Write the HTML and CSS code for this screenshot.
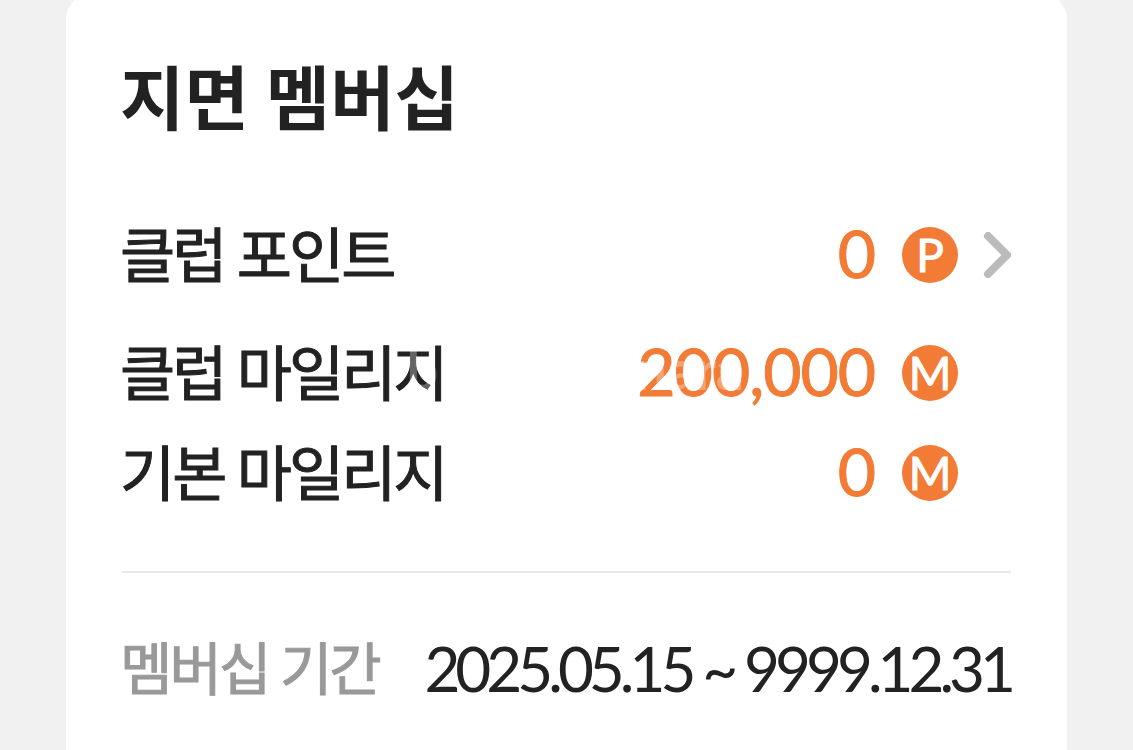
FILE: index.html
```html
<!DOCTYPE html>
<html lang="ko">
<head>
<meta charset="UTF-8">
<meta name="viewport" content="width=device-width, initial-scale=1.0">
<title>지면 멤버십</title>
<link rel="stylesheet" href="styles.css">
</head>
<body>
<main class="card">
    <h1 class="title">지면 멤버십</h1>
    <dl class="balances">
        <div class="row row-point">
            <dt>클럽 포인트</dt>
            <dd>
                <span class="amount">0</span>
                <span class="coin">P</span>
                <a class="more" href="#" aria-label="클럽 포인트 상세">
                    <svg viewBox="0 0 28 46" width="28" height="46"><path d="M5 4 L24 23 L5 42"/></svg>
                </a>
            </dd>
        </div>
        <div class="row">
            <dt>클럽 마일리지</dt>
            <dd>
                <span class="amount">200,000</span>
                <span class="coin">M</span>
                <span class="more"></span>
            </dd>
        </div>
        <div class="row">
            <dt>기본 마일리지</dt>
            <dd>
                <span class="amount">0</span>
                <span class="coin">M</span>
                <span class="more"></span>
            </dd>
        </div>
        <div class="watermark" aria-hidden="true"><span>b</span><span>nara</span></div>
    </dl>
    <dl class="period">
        <dt>멤버십 기간</dt>
        <dd>2025.05.15 ~ 9999.12.31</dd>
    </dl>
</main>
</body>
</html>
```
FILE: styles.css
```css
* {
    box-sizing: border-box;
}

body {
    margin: 0;
    padding: 0 66px;
    background-color: #f1f1f1;
    color: #222;
    font-family: Lato, "Noto Sans CJK KR", sans-serif;
    overflow-x: hidden;
}

.card {
    min-height: calc(100vh + 8px);
    margin-top: -8px;
    padding: 58px 56px 32px;
    background-color: #fff;
    border-radius: 28px 28px 0 0;
}

.title {
    margin: 0 0 0 -2px;
    font-size: 70px;
    line-height: 96px;
    font-weight: 700;
}

.balances {
    position: relative;
    margin: 59px 0 0;
    padding-bottom: 48px;
    border-bottom: 2px solid #e8e8ea;
}

.row {
    display: flex;
    justify-content: space-between;
    align-items: center;
    height: 100px;
}

.row-point {
    margin-bottom: 18px;
}

dt {
    margin-left: -2px;
    padding-bottom: 8px;
    font-size: 60px;
    letter-spacing: -3px;
    -webkit-text-stroke: 1px;
}

dd {
    display: flex;
    align-items: center;
    margin: 0;
}

.amount {
    padding-bottom: 6px;
    color: #f27b35;
    font-size: 66px;
    letter-spacing: -1px;
    -webkit-text-stroke: 1px;
}

.coin {
    width: 56px;
    height: 56px;
    margin-left: 27px;
    border-radius: 50%;
    background-color: #f27b35;
    color: #fff;
    font-size: 46px;
    line-height: 56px;
    text-align: center;
    -webkit-text-stroke: 1px;
}

.more {
    width: 28px;
    margin-left: 25px;
}

.more svg {
    display: block;
    fill: none;
    stroke: #bbb;
    stroke-width: 8;
    stroke-linecap: round;
    stroke-linejoin: round;
}

/* faint mark lying over the mileage row */
.watermark {
    position: absolute;
    top: 124px;
    left: 32%;
    width: 38%;
    display: flex;
    justify-content: space-between;
    color: rgba(255, 255, 255, 0.3);
    font-size: 56px;
    line-height: 80px;
    font-weight: 700;
    pointer-events: none;
}

.period {
    display: flex;
    justify-content: space-between;
    margin: 48px 0 0;
    line-height: 94px;
}

.period dt {
    padding-bottom: 0;
    color: #999;
    font-size: 57px;
}

.period dd {
    font-size: 62px;
    letter-spacing: -5px;
}
```
